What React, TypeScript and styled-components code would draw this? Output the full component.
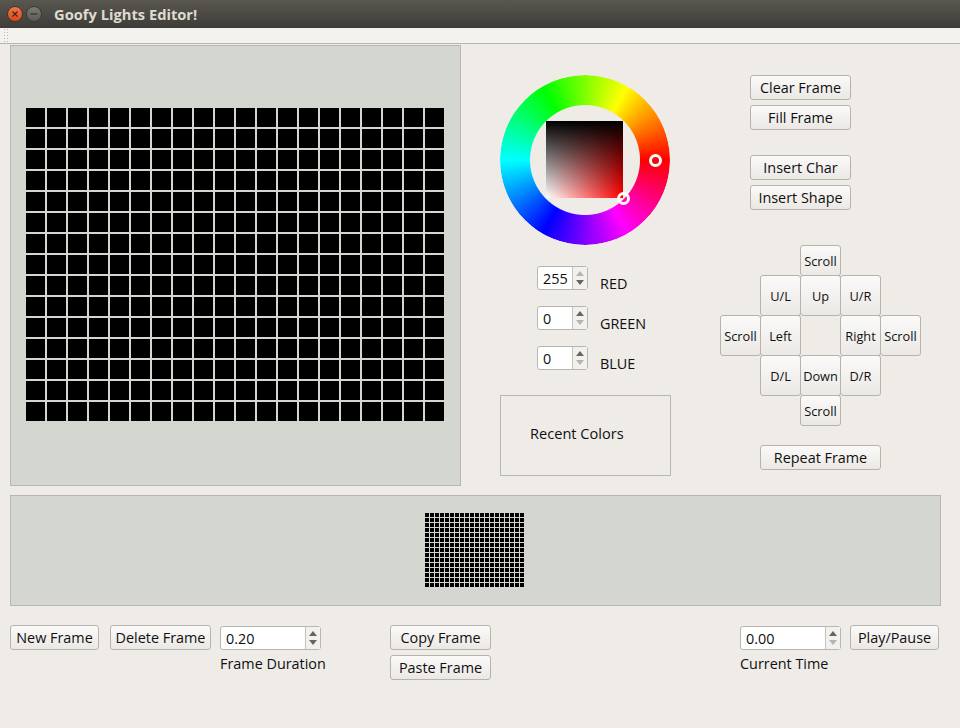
import styled, { createGlobalStyle } from 'styled-components';

const GlobalStyle = createGlobalStyle`
  html, body {
    margin: 0;
    padding: 0;
    background: #efebe7;
  }
  * {
    box-sizing: border-box;
  }
`;

const Window = styled.div`
  width: 960px;
  height: 728px;
  overflow: hidden;
  background: #efebe7;
  color: #101010;
  font-family: 'Open Sans', 'Noto Sans', sans-serif;
  font-size: 14.4px;
`;

const TitleBar = styled.header`
  height: 28px;
  display: flex;
  align-items: center;
  padding-left: 7px;
  background: linear-gradient(#5a5750, #3d3c37);
`;

const WindowButton = styled.span<{ $close?: boolean }>`
  width: 16px;
  height: 16px;
  margin-right: 3px;
  border-radius: 50%;
  display: flex;
  align-items: center;
  justify-content: center;
  border: 1px solid #3a3934;
  background: ${(p) =>
    p.$close ? 'linear-gradient(#f2754a, #dd4814)' : 'linear-gradient(#7b7a74, #5b5a55)'};
`;

const WindowTitle = styled.h1`
  margin: 0 0 0 9px;
  font-size: 14.7px;
  font-weight: 700;
  color: #dfdbd2;
`;

const MenuBar = styled.div`
  height: 16px;
  background: #f4f2ee;
  border-bottom: 1px solid #b6b4ae;
  padding-left: 3px;
`;

const Grip = styled.span`
  display: block;
  width: 6px;
  height: 15px;
  background-image: radial-gradient(circle, #b9b7b1 0.8px, transparent 1px);
  background-size: 3px 3px;
`;

const Content = styled.main`
  padding: 1px 0 0 10px;
`;

const TopRow = styled.section`
  display: flex;
  align-items: flex-start;
`;

const EditorPanel = styled.div`
  width: 451px;
  height: 441px;
  padding: 62px 0 0 15px;
  background: #d3d7cf;
  border: 1px solid #b5b7b0;
`;

const LedGrid = styled.div<{ $cell: number; $gap: number }>`
  display: grid;
  grid-template-columns: repeat(20, ${(p) => p.$cell}px);
  grid-auto-rows: ${(p) => p.$cell}px;
  gap: ${(p) => p.$gap}px;
`;

const Led = styled.span`
  background: #000;
`;

const ColorColumn = styled.div`
  width: 171px;
  margin-left: 39px;
  padding-top: 30px;
`;

const Wheel = styled.div`
  position: relative;
  width: 170px;
  height: 170px;
  display: flex;
  align-items: center;
  justify-content: center;
`;

const HueRing = styled.div`
  position: absolute;
  inset: 0;
  border-radius: 50%;
  background: conic-gradient(from 90deg, #f00, #f0f, #00f, #0ff, #0f0, #ff0, #f00);
  mask: radial-gradient(circle, transparent 54.5px, #000 55.5px);
`;

const ShadeSquare = styled.div`
  position: relative;
  width: 77px;
  height: 77px;
  margin: 0 1px 1px 0;
  background: linear-gradient(to bottom, #000, rgba(0, 0, 0, 0)),
    linear-gradient(to right, #fff, #f00);
`;

const WheelHandle = styled.span<{ $x: number; $y: number }>`
  position: absolute;
  left: ${(p) => p.$x}px;
  top: ${(p) => p.$y}px;
  width: 13px;
  height: 13px;
  border: 3px solid #fff;
  border-radius: 50%;
`;

const ChannelList = styled.div`
  display: flex;
  flex-direction: column;
  gap: 16px;
  margin: 21px 0 25px 37px;
`;

const ChannelRow = styled.div`
  height: 24px;
  display: flex;
  align-items: flex-start;
  gap: 12px;
`;

const ChannelName = styled.span`
  margin-top: 8px;
  line-height: 20px;
`;

const Spin = styled.div<{ $width: number }>`
  width: ${(p) => p.$width}px;
  height: 24px;
  display: flex;
  background: #fff;
  border: 1px solid #b8b6b0;
  border-radius: 3px;
`;

const SpinValue = styled.span`
  flex: 1;
  padding-left: 5px;
  line-height: 23px;
`;

const SpinArrows = styled.span`
  width: 15px;
  display: flex;
  flex-direction: column;
  align-items: center;
  justify-content: center;
  gap: 4px;
  background: #f3f1ee;
  border-left: 1px solid #c4c2bc;
`;

const Arrow = styled.i<{ $down?: boolean; $off?: boolean }>`
  width: 0;
  height: 0;
  border-left: 4px solid transparent;
  border-right: 4px solid transparent;
  border-${(p) => (p.$down ? 'top' : 'bottom')}: 5px solid ${(p) => (p.$off ? '#b4b4b0' : '#66665f')};
`;

const RecentBox = styled.div`
  width: 171px;
  height: 81px;
  padding: 0 0 5px 29px;
  display: flex;
  align-items: center;
  font-size: 14.6px;
  border: 1px solid #b8b8b2;
`;

const ActionColumn = styled.div`
  width: 201px;
  margin-left: 49px;
  padding-top: 30px;
`;

const ButtonStack = styled.div<{ $after: number }>`
  display: flex;
  flex-direction: column;
  align-items: flex-start;
  gap: 5px;
  margin: 0 0 ${(p) => p.$after}px 30px;
`;

const Button = styled.button<{ $width: number }>`
  width: ${(p) => p.$width}px;
  height: 25px;
  padding: 0;
  font: inherit;
  color: inherit;
  white-space: nowrap;
  background: linear-gradient(#fbfaf9, #ebe8e4);
  border: 1px solid #b6b3ad;
  border-radius: 3px;
`;

const Pad = styled.div`
  display: grid;
  grid-template-columns: repeat(5, 40px);
  grid-template-rows: 30px 40px 40px 40px 30px;
`;

const PadButton = styled.button<{ $col: number; $row: number }>`
  grid-column: ${(p) => p.$col};
  grid-row: ${(p) => p.$row};
  width: 41px;
  height: calc(100% + 1px);
  padding: 0;
  font: inherit;
  font-size: 12.8px;
  color: inherit;
  white-space: nowrap;
  background: linear-gradient(#fbfaf9, #ebe8e4);
  border: 1px solid #b6b3ad;
  border-radius: 3px;
`;

const RepeatSlot = styled.div`
  margin: 20px 0 0 40px;
`;

const FilmStrip = styled.section`
  width: 931px;
  height: 111px;
  margin-top: 9px;
  padding: 17px 0 0 414px;
  background: #d3d7cf;
  border: 1px solid #b5b7b0;
`;

const BottomRow = styled.section`
  display: flex;
  align-items: flex-start;
  margin-top: 19px;
`;

const FieldGroup = styled.div<{ $left: number }>`
  width: 101px;
  display: flex;
  flex-direction: column;
  align-items: flex-start;
  margin-left: ${(p) => p.$left}px;
  padding-top: 1px;
`;

const FieldLabel = styled.label`
  margin-top: 4px;
  line-height: 20px;
  white-space: nowrap;
`;

const Spaced = styled.div<{ $left: number }>`
  margin-left: ${(p) => p.$left}px;
`;

const CopyStack = styled.div`
  display: flex;
  flex-direction: column;
  gap: 5px;
  margin-left: 69px;
`;

const pad: [string, number, number][] = [
  ['Scroll', 3, 1],
  ['U/L', 2, 2],
  ['Up', 3, 2],
  ['U/R', 4, 2],
  ['Scroll', 1, 3],
  ['Left', 2, 3],
  ['Right', 4, 3],
  ['Scroll', 5, 3],
  ['D/L', 2, 4],
  ['Down', 3, 4],
  ['D/R', 4, 4],
  ['Scroll', 3, 5],
];

const leds = Array.from({ length: 300 }, (_, i) => i);

const SpinBox = ({
  value,
  width,
  upOff,
  downOff,
}: {
  value: string;
  width: number;
  upOff?: boolean;
  downOff?: boolean;
}) => (
  <Spin $width={width}>
    <SpinValue>{value}</SpinValue>
    <SpinArrows>
      <Arrow $off={upOff} />
      <Arrow $down $off={downOff} />
    </SpinArrows>
  </Spin>
);

const App = () => {
  return (
    <Window>
      <GlobalStyle />
      <TitleBar>
        <WindowButton $close>
          <svg width="8" height="8" viewBox="0 0 8 8">
            <path d="M1.5 1.5l5 5M6.5 1.5l-5 5" stroke="#3a2a20" strokeWidth="1.2" />
          </svg>
        </WindowButton>
        <WindowButton>
          <svg width="8" height="8" viewBox="0 0 8 8">
            <path d="M0.5 4h7" stroke="#35342f" strokeWidth="1.2" />
          </svg>
        </WindowButton>
        <WindowTitle>Goofy Lights Editor!</WindowTitle>
      </TitleBar>
      <MenuBar>
        <Grip />
      </MenuBar>
      <Content>
        <TopRow>
          <EditorPanel>
            <LedGrid $cell={19} $gap={2}>
              {leds.map((i) => (
                <Led key={i} />
              ))}
            </LedGrid>
          </EditorPanel>
          <ColorColumn>
            <Wheel>
              <HueRing />
              <ShadeSquare />
              <WheelHandle $x={149} $y={79} />
              <WheelHandle $x={117} $y={117} />
            </Wheel>
            <ChannelList>
              <ChannelRow>
                <SpinBox value="255" width={51} upOff />
                <ChannelName>RED</ChannelName>
              </ChannelRow>
              <ChannelRow>
                <SpinBox value="0" width={51} downOff />
                <ChannelName>GREEN</ChannelName>
              </ChannelRow>
              <ChannelRow>
                <SpinBox value="0" width={51} downOff />
                <ChannelName>BLUE</ChannelName>
              </ChannelRow>
            </ChannelList>
            <RecentBox>Recent Colors</RecentBox>
          </ColorColumn>
          <ActionColumn>
            <ButtonStack $after={25}>
              <Button $width={101}>Clear Frame</Button>
              <Button $width={101}>Fill Frame</Button>
            </ButtonStack>
            <ButtonStack $after={35}>
              <Button $width={101}>Insert Char</Button>
              <Button $width={101}>Insert Shape</Button>
            </ButtonStack>
            <Pad>
              {pad.map(([label, col, row]) => (
                <PadButton key={`${col}-${row}`} $col={col} $row={row}>
                  {label}
                </PadButton>
              ))}
            </Pad>
            <RepeatSlot>
              <Button $width={121}>Repeat Frame</Button>
            </RepeatSlot>
          </ActionColumn>
        </TopRow>
        <FilmStrip>
          <LedGrid $cell={4} $gap={1}>
            {leds.map((i) => (
              <Led key={i} />
            ))}
          </LedGrid>
        </FilmStrip>
        <BottomRow>
          <Button $width={89}>New Frame</Button>
          <Spaced $left={11}>
            <Button $width={101}>Delete Frame</Button>
          </Spaced>
          <FieldGroup $left={9}>
            <SpinBox value="0.20" width={101} />
            <FieldLabel>Frame Duration</FieldLabel>
          </FieldGroup>
          <CopyStack>
            <Button $width={101}>Copy Frame</Button>
            <Button $width={101}>Paste Frame</Button>
          </CopyStack>
          <FieldGroup $left={249}>
            <SpinBox value="0.00" width={101} downOff />
            <FieldLabel>Current Time</FieldLabel>
          </FieldGroup>
          <Spaced $left={9}>
            <Button $width={89}>Play/Pause</Button>
          </Spaced>
        </BottomRow>
      </Content>
    </Window>
  );
};

export default App;
